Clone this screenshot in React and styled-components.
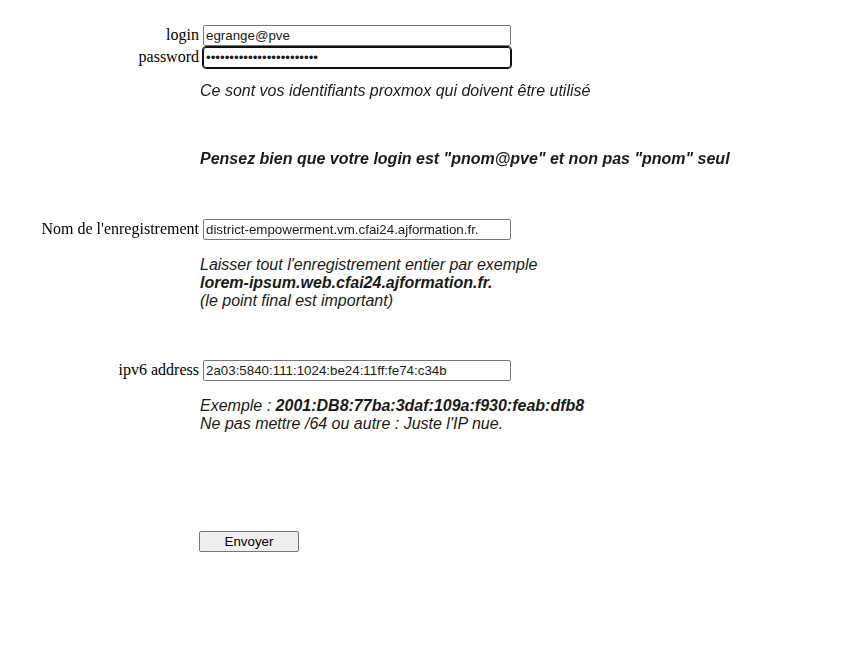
import styled, { createGlobalStyle } from "styled-components";

const GlobalStyle = createGlobalStyle`
  body {
    margin: 8px;
    background: #ffffff;
    color: #000000;
    font-family: "Liberation Serif", "Times New Roman", serif;
    font-size: 16px;
  }
`;

const Form = styled.form`
  display: flex;
  flex-direction: column;
  padding-top: 16px;
`;

const Row = styled.div`
  display: flex;
  align-items: center;
  height: 22px;
  margin-top: ${(p) => p.$gap || 0}px;
`;

const Label = styled.label`
  width: 191px;
  text-align: right;
  font-family: "Liberation Serif", "Times New Roman", serif;
  font-size: 16px;
`;

const Input = styled.input`
  box-sizing: border-box;
  width: 308px;
  height: 21px;
  margin: 0 0 0 4px;
  padding: 1px 2px;
  border: 1px solid #767676;
  border-radius: 2px;
  font-family: "Liberation Sans", Arial, sans-serif;
  font-size: 13.33px;
  color: #1a1a1a;
  background: #ffffff;

  &:focus {
    outline: 1px solid #101010;
    border-color: #101010;
    border-radius: 3px;
  }
`;

const Hint = styled.div`
  margin-top: ${(p) => p.$gap || 0}px;
  padding-left: 192px;
  font-family: "Liberation Sans", Arial, sans-serif;
  font-size: 16px;
  font-style: italic;
  line-height: 18px;
  color: #1a1a1a;
  font-weight: ${(p) => (p.$bold ? 700 : 400)};
`;

const Button = styled.button`
  box-sizing: border-box;
  width: 100px;
  height: 21px;
  margin: 98px 0 0 191px;
  padding: 1px 6px;
  border: 1px solid #767676;
  border-radius: 2px;
  background: #efefef;
  font-family: "Liberation Sans", Arial, sans-serif;
  font-size: 13.33px;
  color: #000000;
  align-self: flex-start;
`;

export default function App() {
  return (
    <>
      <GlobalStyle />
      <Form onSubmit={(e) => e.preventDefault()}>
        <Row>
          <Label htmlFor="login">login</Label>
          <Input id="login" defaultValue="egrange@pve" />
        </Row>
        <Row>
          <Label htmlFor="password">password</Label>
          <Input
            id="password"
            type="password"
            autoFocus
            defaultValue="aaaaaaaaaaaaaaaaaaaaaaaa"
          />
        </Row>
        <Hint $gap={14}>Ce sont vos identifiants proxmox qui doivent être utilisé</Hint>
        <Hint $gap={50} $bold>
          Pensez bien que votre login est "pnom@pve" et non pas "pnom" seul
        </Hint>
        <Row $gap={50}>
          <Label htmlFor="record">Nom de l'enregistrement</Label>
          <Input id="record" defaultValue="district-empowerment.vm.cfai24.ajformation.fr." />
        </Row>
        <Hint $gap={16}>
          Laisser tout l'enregistrement entier par exemple
          <br />
          <b>lorem-ipsum.web.cfai24.ajformation.fr.</b>
          <br />
          (le point final est important)
        </Hint>
        <Row $gap={49}>
          <Label htmlFor="ipv6">ipv6 address</Label>
          <Input id="ipv6" defaultValue="2a03:5840:111:1024:be24:11ff:fe74:c34b" />
        </Row>
        <Hint $gap={16}>
          Exemple : <b>2001:DB8:77ba:3daf:109a:f930:feab:dfb8</b>
          <br />
          Ne pas mettre /64 ou autre : Juste l'IP nue.
        </Hint>
        <Button type="submit">Envoyer</Button>
      </Form>
    </>
  );
}
